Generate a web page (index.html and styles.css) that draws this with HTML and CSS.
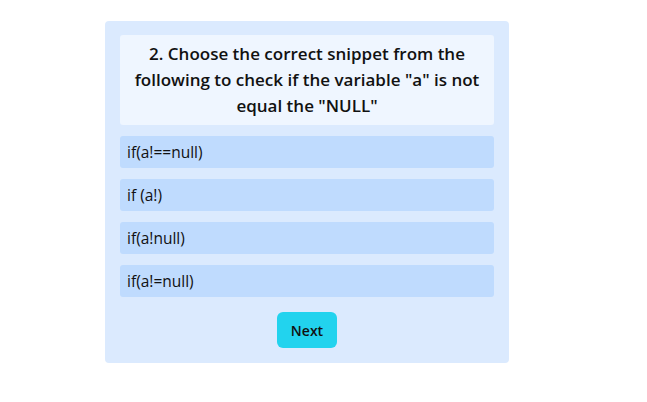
FILE: index.html
```html
<!DOCTYPE html>
<html>
<head>
<meta charset="utf-8">
<link rel="stylesheet" href="styles.css">
</head>
<body>
<div class="quiz">
  <div class="question">2. Choose the correct snippet from the following to check if the variable "a" is not equal the "NULL"</div>
  <ul class="options">
    <li class="option">if(a!==null)</li>
    <li class="option">if (a!)</li>
    <li class="option">if(a!null)</li>
    <li class="option">if(a!=null)</li>
  </ul>
  <div class="actions"><button class="next">Next</button></div>
</div>
</body>
</html>
```
FILE: styles.css
```css
html, body { margin: 0; padding: 0; background: #fff; }
body {
  font-family: "Open Sans", "Noto Sans", sans-serif;
  color: #111;
  padding: 21px 0 0 105px;
}
.quiz {
  width: 374px;
  padding: 14px 15px 15px;
  background: #dbeafe;
  border-radius: 4px;
}
.question {
  background: #eff6ff;
  border-radius: 3px;
  padding: 6px 10px;
  text-align: center;
  font-size: 17px;
  font-weight: 600;
  line-height: 26px;
}
.options {
  list-style: none;
  margin: 11px 0 0;
  padding: 0;
  display: flex;
  flex-direction: column;
  gap: 11px;
}
.option {
  background: #bfdbfe;
  border-radius: 3px;
  height: 32px;
  padding: 0 7px;
  display: flex;
  align-items: center;
  font-size: 15.5px;
}
.actions {
  display: flex;
  justify-content: center;
  margin-top: 15px;
}
.next {
  width: 60px;
  height: 36px;
  border: none;
  border-radius: 6px;
  background: #22d3ee;
  color: #111;
  font-family: inherit;
  font-size: 14px;
  font-weight: 600;
  cursor: pointer;
}
```
